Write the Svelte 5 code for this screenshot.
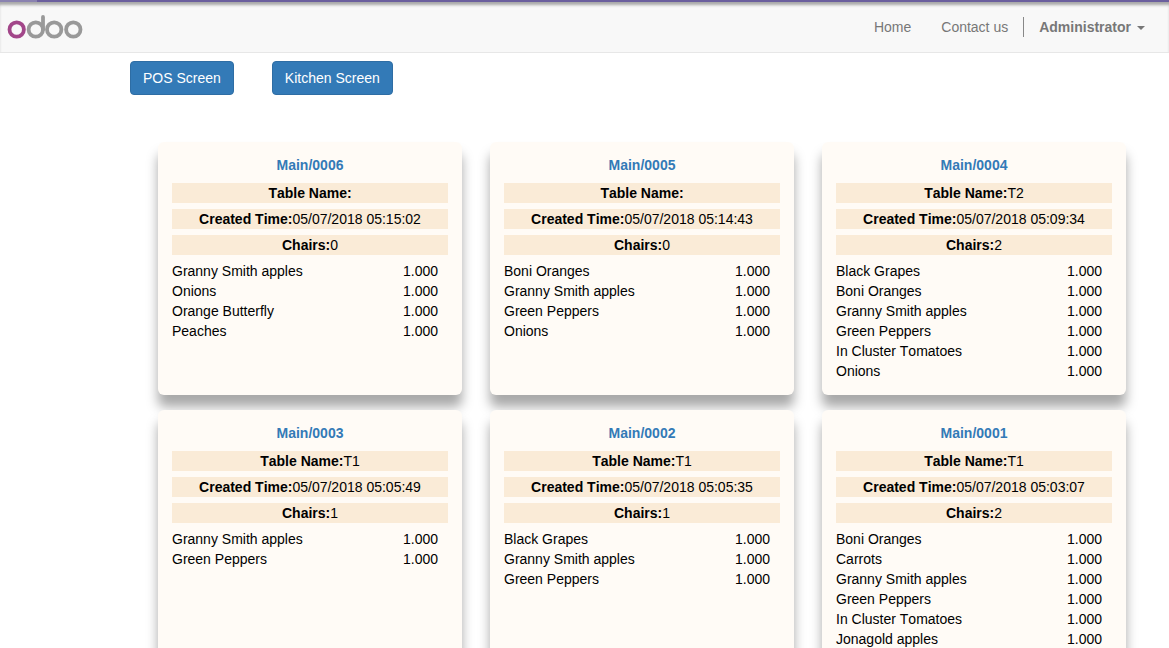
<script>
  const orders = [
    { ref: 'Main/0006', table: '', time: '05/07/2018 05:15:02', chairs: 0, lines: ['Granny Smith apples', 'Onions', 'Orange Butterfly', 'Peaches'] },
    { ref: 'Main/0005', table: '', time: '05/07/2018 05:14:43', chairs: 0, lines: ['Boni Oranges', 'Granny Smith apples', 'Green Peppers', 'Onions'] },
    { ref: 'Main/0004', table: 'T2', time: '05/07/2018 05:09:34', chairs: 2, lines: ['Black Grapes', 'Boni Oranges', 'Granny Smith apples', 'Green Peppers', 'In Cluster Tomatoes', 'Onions'] },
    { ref: 'Main/0003', table: 'T1', time: '05/07/2018 05:05:49', chairs: 1, lines: ['Granny Smith apples', 'Green Peppers'] },
    { ref: 'Main/0002', table: 'T1', time: '05/07/2018 05:05:35', chairs: 1, lines: ['Black Grapes', 'Granny Smith apples', 'Green Peppers'] },
    { ref: 'Main/0001', table: 'T1', time: '05/07/2018 05:03:07', chairs: 2, lines: ['Boni Oranges', 'Carrots', 'Granny Smith apples', 'Green Peppers', 'In Cluster Tomatoes', 'Jonagold apples'] }
  ];
</script>

<div class="page">
  <div class="topline"></div>
  <header class="navbar">
    <a class="brand" href="#home" aria-label="Odoo">
      <svg width="76" height="26" viewBox="0 0 76 26">
        <circle cx="9.7" cy="15.5" r="7.2" fill="none" stroke="#a24689" stroke-width="3.8" />
        <circle cx="28.8" cy="15.5" r="7.2" fill="none" stroke="#999" stroke-width="3.8" />
        <path d="M36 3v12.5" fill="none" stroke="#999" stroke-width="3.8" stroke-linecap="round" />
        <circle cx="47.2" cy="15.5" r="7.2" fill="none" stroke="#999" stroke-width="3.8" />
        <circle cx="66.3" cy="15.5" r="7.2" fill="none" stroke="#999" stroke-width="3.8" />
      </svg>
    </a>
    <nav class="nav">
      <a href="#home">Home</a>
      <a href="#contact">Contact us</a>
      <span class="divider"></span>
      <a class="user" href="#user">Administrator<span class="caret"></span></a>
    </nav>
  </header>

  <div class="actions">
    <button>POS Screen</button>
    <button>Kitchen Screen</button>
  </div>

  <main class="grid">
    {#each orders as order}
      <section class="card">
        <h4>{order.ref}</h4>
        <div class="band"><b>Table Name:</b>{order.table}</div>
        <div class="band"><b>Created Time:</b>{order.time}</div>
        <div class="band"><b>Chairs:</b>{order.chairs}</div>
        <ul>
          {#each order.lines as line}
            <li><span>{line}</span><span class="qty">1.000</span></li>
          {/each}
        </ul>
      </section>
    {/each}
  </main>
</div>

<style>
  :global(body) {
    margin: 0;
    overflow: hidden;
    background: #fff;
    font-family: "Liberation Sans", Arial, sans-serif;
    font-size: 14px;
    line-height: 20px;
    font-kerning: none;
    color: #000;
  }

  .page {
    height: 648px;
    overflow: hidden;
  }

  .topline {
    height: 2px;
    background: linear-gradient(to right, #8a82b0 37px, #6b5f9e 37px);
  }

  .navbar {
    height: 50px;
    display: flex;
    align-items: center;
    justify-content: space-between;
    padding-right: 24px;
    background: #f8f8f8;
    border-bottom: 1px solid #e7e7e7;
    box-shadow: inset 0 4px 3px -1px #a8a8a8;
  }

  .brand {
    display: flex;
    margin-left: 7px;
    margin-top: -1px;
  }

  .nav {
    display: flex;
    align-items: center;
    margin-top: -1px;
  }

  .nav a {
    color: #777;
    text-decoration: none;
  }

  .nav a + a {
    margin-left: 30px;
  }

  .divider {
    width: 1px;
    height: 20px;
    margin: 0 15px;
    background: #888;
  }

  .nav .user {
    margin-left: 0;
    font-weight: 700;
  }

  .caret {
    display: inline-block;
    margin-left: 6px;
    vertical-align: middle;
    border-top: 4px solid #777;
    border-left: 4px solid transparent;
    border-right: 4px solid transparent;
  }

  .actions {
    display: flex;
    gap: 38px;
    padding: 8px 0 0 130px;
  }

  button {
    height: 34px;
    padding: 6px 12px;
    font: inherit;
    font-kerning: none;
    color: #fff;
    background: #337ab7;
    border: 1px solid #2e6da4;
    border-radius: 4px;
  }

  .grid {
    display: grid;
    grid-template-columns: repeat(3, 304px);
    column-gap: 28px;
    row-gap: 15px;
    padding: 47px 0 0 158px;
  }

  .card {
    height: 253px;
    padding: 13px 14px 10px;
    box-sizing: border-box;
    background: #fffbf6;
    border-radius: 6px;
    box-shadow: 0 12px 12px rgba(0, 0, 0, 0.34);
  }

  h4 {
    margin: 0 0 8px;
    font-size: 14px;
    line-height: 20px;
    font-weight: 700;
    text-align: center;
    color: #337ab7;
  }

  .band {
    height: 20px;
    margin-bottom: 6px;
    text-align: center;
    background: #faebd7;
  }

  ul {
    margin: 0;
    padding: 0;
    list-style: none;
  }

  li {
    display: flex;
    justify-content: space-between;
    padding-right: 10px;
  }
</style>
